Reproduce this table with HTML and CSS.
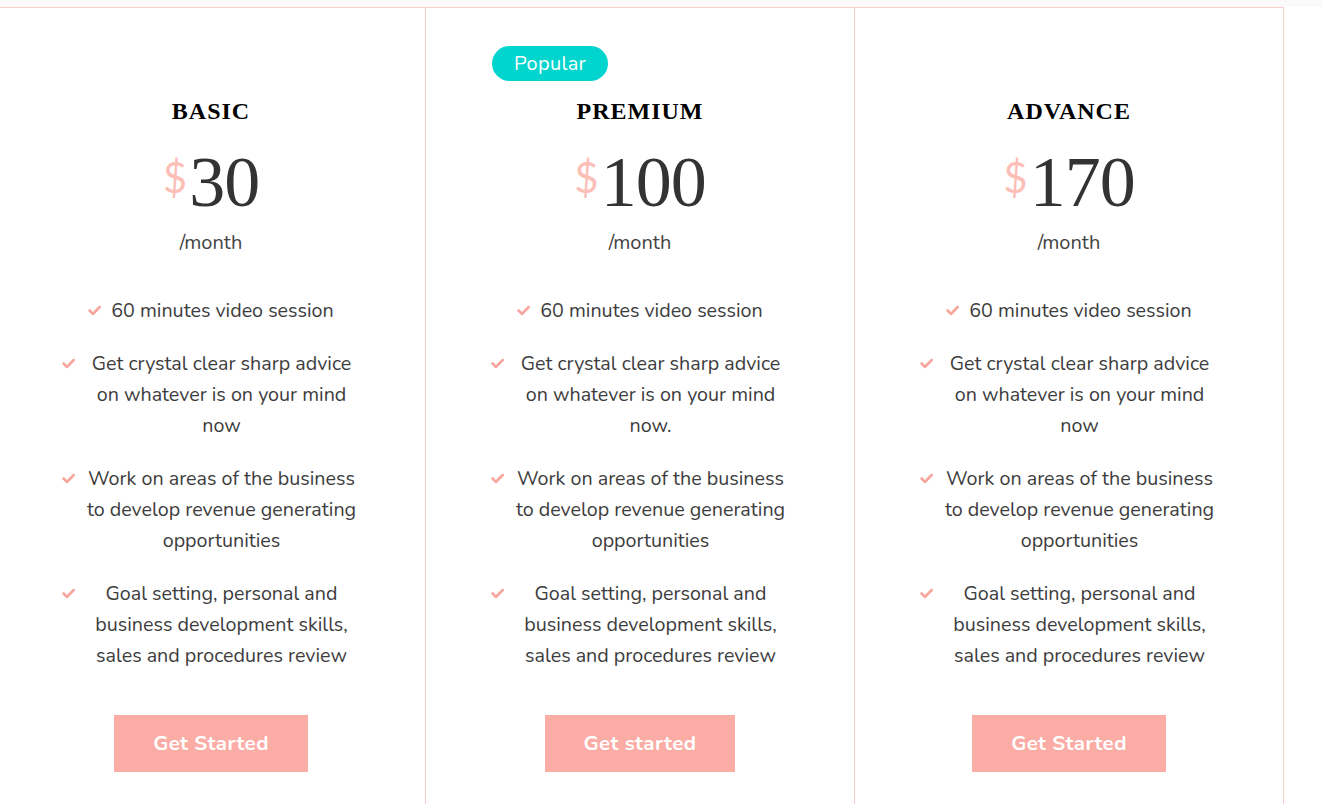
FILE: index.html
```html
<!DOCTYPE html>
<html lang="en">
<head>
<meta charset="utf-8">
<title>Pricing</title>
<link rel="stylesheet" href="styles.css">
</head>
<body>
<div class="topstrip"></div>
<section class="plans">
  <article class="plan">
    <h2 class="plan-title">BASIC</h2>
    <div class="price"><span class="cur">$</span><span class="amt">30</span></div>
    <div class="period">/month</div>
    <ul class="features">
      <li><svg class="chk" viewBox="0 0 12 10"><path d="M1.5 5 L4.5 8.2 L10.8 1.8"/></svg><span>60 minutes video session</span></li>
      <li><svg class="chk" viewBox="0 0 12 10"><path d="M1.5 5 L4.5 8.2 L10.8 1.8"/></svg><span>Get crystal clear sharp advice on whatever is on your mind now</span></li>
      <li><svg class="chk" viewBox="0 0 12 10"><path d="M1.5 5 L4.5 8.2 L10.8 1.8"/></svg><span>Work on areas of the business to develop revenue generating opportunities</span></li>
      <li><svg class="chk" viewBox="0 0 12 10"><path d="M1.5 5 L4.5 8.2 L10.8 1.8"/></svg><span>Goal setting, personal and business development skills, sales and procedures review</span></li>
    </ul>
    <a class="btn" href="#">Get Started</a>
  </article>
  <article class="plan">
    <span class="badge">Popular</span>
    <h2 class="plan-title">PREMIUM</h2>
    <div class="price"><span class="cur">$</span><span class="amt">100</span></div>
    <div class="period">/month</div>
    <ul class="features">
      <li><svg class="chk" viewBox="0 0 12 10"><path d="M1.5 5 L4.5 8.2 L10.8 1.8"/></svg><span>60 minutes video session</span></li>
      <li><svg class="chk" viewBox="0 0 12 10"><path d="M1.5 5 L4.5 8.2 L10.8 1.8"/></svg><span>Get crystal clear sharp advice on whatever is on your mind now.</span></li>
      <li><svg class="chk" viewBox="0 0 12 10"><path d="M1.5 5 L4.5 8.2 L10.8 1.8"/></svg><span>Work on areas of the business to develop revenue generating opportunities</span></li>
      <li><svg class="chk" viewBox="0 0 12 10"><path d="M1.5 5 L4.5 8.2 L10.8 1.8"/></svg><span>Goal setting, personal and business development skills, sales and procedures review</span></li>
    </ul>
    <a class="btn" href="#">Get started</a>
  </article>
  <article class="plan">
    <h2 class="plan-title">ADVANCE</h2>
    <div class="price"><span class="cur">$</span><span class="amt">170</span></div>
    <div class="period">/month</div>
    <ul class="features">
      <li><svg class="chk" viewBox="0 0 12 10"><path d="M1.5 5 L4.5 8.2 L10.8 1.8"/></svg><span>60 minutes video session</span></li>
      <li><svg class="chk" viewBox="0 0 12 10"><path d="M1.5 5 L4.5 8.2 L10.8 1.8"/></svg><span>Get crystal clear sharp advice on whatever is on your mind now</span></li>
      <li><svg class="chk" viewBox="0 0 12 10"><path d="M1.5 5 L4.5 8.2 L10.8 1.8"/></svg><span>Work on areas of the business to develop revenue generating opportunities</span></li>
      <li><svg class="chk" viewBox="0 0 12 10"><path d="M1.5 5 L4.5 8.2 L10.8 1.8"/></svg><span>Goal setting, personal and business development skills, sales and procedures review</span></li>
    </ul>
    <a class="btn" href="#">Get Started</a>
  </article>
</section>
</body>
</html>
```
FILE: styles.css
```css
* { box-sizing: border-box; }
html, body { margin: 0; padding: 0; background: #fff; }
body {
  font-family: "Nunito", "Lato", "Open Sans", sans-serif;
  color: #3d3d3d;
  overflow: hidden;
}
.topstrip { height: 7px; background: #fafafa; }
.plans {
  display: flex;
  margin-left: -3px;
  width: 1290px;
}
.plan {
  position: relative;
  width: 429px;
  flex: 0 0 429px;
  border-top: 1px solid #f7cfcf;
  border-right: 1px solid #f4cdcd;
  display: flex;
  flex-direction: column;
  align-items: center;
  padding-top: 89px;
  height: 797px;
}
.badge {
  position: absolute;
  left: 66px;
  top: 38px;
  width: 116px;
  height: 35px;
  border-radius: 18px;
  background: #02d5cd;
  color: #fff;
  font-size: 20px;
  line-height: 35px;
  text-align: center;
  letter-spacing: 0.3px;
}
.plan-title {
  margin: 0;
  font-family: "Liberation Serif", "Times New Roman", serif;
  font-weight: bold;
  font-size: 24px;
  line-height: 28px;
  letter-spacing: 1px;
  color: #000;
}
.price {
  margin-top: 21px;
  display: flex;
  align-items: flex-start;
  height: 72px;
}
.cur {
  font-family: "Lato", sans-serif;
  font-size: 42px;
  line-height: 42px;
  color: #fcbfb8;
  margin-top: 10px;
  margin-right: 2px;
}
.amt {
  font-family: "Liberation Serif", "Times New Roman", serif;
  font-size: 72px;
  line-height: 72px;
  color: #333;
  letter-spacing: -1px;
}
.period {
  margin-top: 13px;
  font-size: 20px;
  line-height: 24px;
  color: #444;
}
.features {
  list-style: none;
  margin: 40px 0 0 0;
  padding: 0;
  width: 298px;
}
.features li {
  display: flex;
  justify-content: center;
  align-items: flex-start;
  font-size: 19.7px;
  line-height: 31px;
  margin-bottom: 22px;
  color: #3d3d3d;
}
.features li:last-child { margin-bottom: 0; }
.features li span {
  text-align: center;
  flex: 0 1 auto;
}
.features li .chk {
  flex: 0 0 13px;
  width: 13px;
  height: 11px;
  margin-top: 10px;
  margin-right: 10px;
  fill: none;
  stroke: #f7a69d;
  stroke-width: 2.4;
  stroke-linecap: round;
  stroke-linejoin: round;
}
.features li:not(:first-child) .chk { margin-right: 8px; }
.features li:not(:first-child) span { flex: 1 1 auto; }
.btn {
  margin-top: 44px;
  height: 57px;
  padding: 0 39px;
  background: #fbaca5;
  color: #fff;
  font-weight: bold;
  font-size: 20.5px;
  line-height: 57px;
  text-decoration: none;
  letter-spacing: 0.4px;
}
```
